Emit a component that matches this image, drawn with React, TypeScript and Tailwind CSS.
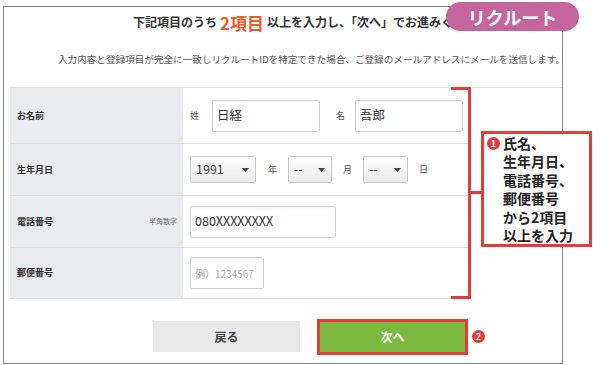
import React from "react";

const font = { fontFamily: '"Noto Sans CJK JP", "Noto Sans", sans-serif' };

function Caret() {
  return (
    <svg width="7" height="4" viewBox="0 0 7 4" className="shrink-0">
      <path d="M0 0 L7 0 L3.5 4 Z" fill="#444" />
    </svg>
  );
}

function Select({ value, w }: { value: string; w: string }) {
  return (
    <div
      className={`${w} h-[27px] flex items-center justify-between pl-[5px] pr-[6px] border border-[#c8c8c8] rounded-[2px] bg-linear-to-b from-[#fdfdfd] to-[#ececec] text-[#444]`}
    >
      <span className="text-[12.5px] leading-none">{value}</span>
      <Caret />
    </div>
  );
}

function Input({ w, children, ph }: { w: string; children: React.ReactNode; ph?: boolean }) {
  return (
    <div
      className={`${w} h-[32px] flex items-center pl-[4px] border border-[#cfcfcf] rounded-[2px] bg-white shadow-[inset_0_1px_2px_rgba(0,0,0,0.06)] ${
        ph ? "text-[10px] text-[#a8a8a8]" : "text-[12.5px] text-[#333]"
      }`}
    >
      {children}
    </div>
  );
}

export default function App() {
  return (
    <div className="relative w-[600px] h-[365px] bg-white overflow-hidden" style={font}>
      {/* frame */}
      <div className="ml-[3px] mt-[6px] w-[560px] h-[358px] border border-[#858585] flex flex-col">
        <div className="h-[30px] flex items-center pl-[129px] text-[12px] font-bold text-[#333] whitespace-nowrap">
          <span>下記項目のうち</span>
          <span className="text-[17px] text-[#ee5a2a] mx-[3px] leading-none">2項目</span>
          <span>以上を入力し、「次へ」でお進みください。</span>
        </div>
        <div className="h-[44px] flex items-center pl-[54px] text-[9.6px] text-[#555] whitespace-nowrap">
          入力内容と登録項目が完全に一致しリクルートIDを特定できた場合、ご登録のメールアドレスにメールを送信します。
        </div>
        <div className="mt-[6px] ml-[6px] border-t border-[#dcdcdc]">
          <div className="w-[460px] border-b border-[#dcdcdc] text-[#333]">
            {/* row 1 */}
            <div className="flex h-[55px]">
              <div className="w-[173px] bg-[#e9ebee] flex items-center pl-[7px] text-[9px] font-bold">お名前</div>
              <div className="flex-1 flex items-center pl-[7px]">
                <span className="text-[9px] text-[#555] w-[22px]">姓</span>
                <Input w="w-[108px]">日経</Input>
                <span className="text-[9px] text-[#555] ml-[16px] w-[19px]">名</span>
                <Input w="w-[108px]">吾郎</Input>
              </div>
            </div>
            {/* row 2 */}
            <div className="flex h-[52px] border-t border-[#dcdcdc]">
              <div className="w-[173px] bg-[#e9ebee] flex items-center pl-[7px] text-[9px] font-bold">生年月日</div>
              <div className="flex-1 flex items-center pl-[7px] text-[9px] text-[#555]">
                <Select value="1991" w="w-[66px]" />
                <span className="ml-[12px] w-[20px]">年</span>
                <Select value="--" w="w-[44px]" />
                <span className="ml-[11px] w-[20px]">月</span>
                <Select value="--" w="w-[45px]" />
                <span className="ml-[11px]">日</span>
              </div>
            </div>
            {/* row 3 */}
            <div className="flex h-[52px] border-t border-[#dcdcdc]">
              <div className="w-[173px] bg-[#e9ebee] flex items-center justify-between pl-[7px] pr-[6px]">
                <span className="text-[9px] font-bold">電話番号</span>
                <span className="text-[7px] text-[#666]">半角数字</span>
              </div>
              <div className="flex-1 flex items-center pl-[7px]">
                <Input w="w-[146px]">080XXXXXXXX</Input>
              </div>
            </div>
            {/* row 4 */}
            <div className="flex h-[51px] border-t border-[#dcdcdc]">
              <div className="w-[173px] bg-[#e9ebee] flex items-center pl-[7px] text-[9px] font-bold">郵便番号</div>
              <div className="flex-1 flex items-center pl-[7px]">
                <Input w="w-[74px]" ph>
                  例）1234567
                </Input>
              </div>
            </div>
          </div>
        </div>
        {/* buttons */}
        <div className="mt-[22px] ml-[149px] flex items-center">
          <div className="w-[147px] h-[31px] bg-[#e8e8e8] flex items-center justify-center text-[12px] font-bold text-[#444]">
            戻る
          </div>
          <div className="ml-[20px] w-[145px] h-[30px] bg-[#7bb83e] outline-[3px] outline-solid outline-[#e63b3b] flex items-center justify-center text-[12px] font-bold text-white">
            次へ
          </div>
          <div className="ml-[7px] w-[13px] h-[13px] rounded-full bg-[#e63b3b] flex items-center justify-center text-white text-[9px] font-bold leading-none">
            2
          </div>
        </div>
      </div>

      {/* badge */}
      <div className="absolute left-[446px] top-[2px] w-[133px] h-[29px] rounded-full bg-[#c4669d] flex items-center justify-center text-white text-[18px] font-bold leading-none">
        リクルート
      </div>

      {/* bracket */}
      <div className="absolute left-[451px] top-[87px] w-[20px] h-[3px] bg-[#e63b3b]" />
      <div className="absolute left-[468px] top-[87px] w-[3px] h-[212px] bg-[#e63b3b]" />
      <div className="absolute left-[451px] top-[296px] w-[20px] h-[3px] bg-[#e63b3b]" />
      <div className="absolute left-[470px] top-[191px] w-[12px] h-[3px] bg-[#e63b3b]" />

      {/* callout */}
      <div className="absolute left-[481px] top-[131px] w-[111px] h-[116px] border-[3px] border-[#e63b3b] bg-white pl-[3px] text-[14px] font-bold text-[#222] leading-[18.4px]">
        <div className="flex items-center">
          <span className="w-[13px] h-[13px] mr-[3px] rounded-full bg-[#e63b3b] text-white text-[9px] leading-none flex items-center justify-center">
            1
          </span>
          <span>氏名、</span>
        </div>
        <div className="pl-[16px]">生年月日、</div>
        <div className="pl-[16px]">電話番号、</div>
        <div className="pl-[16px]">郵便番号</div>
        <div className="pl-[16px]">から2項目</div>
        <div className="pl-[16px]">以上を入力</div>
      </div>
    </div>
  );
}
